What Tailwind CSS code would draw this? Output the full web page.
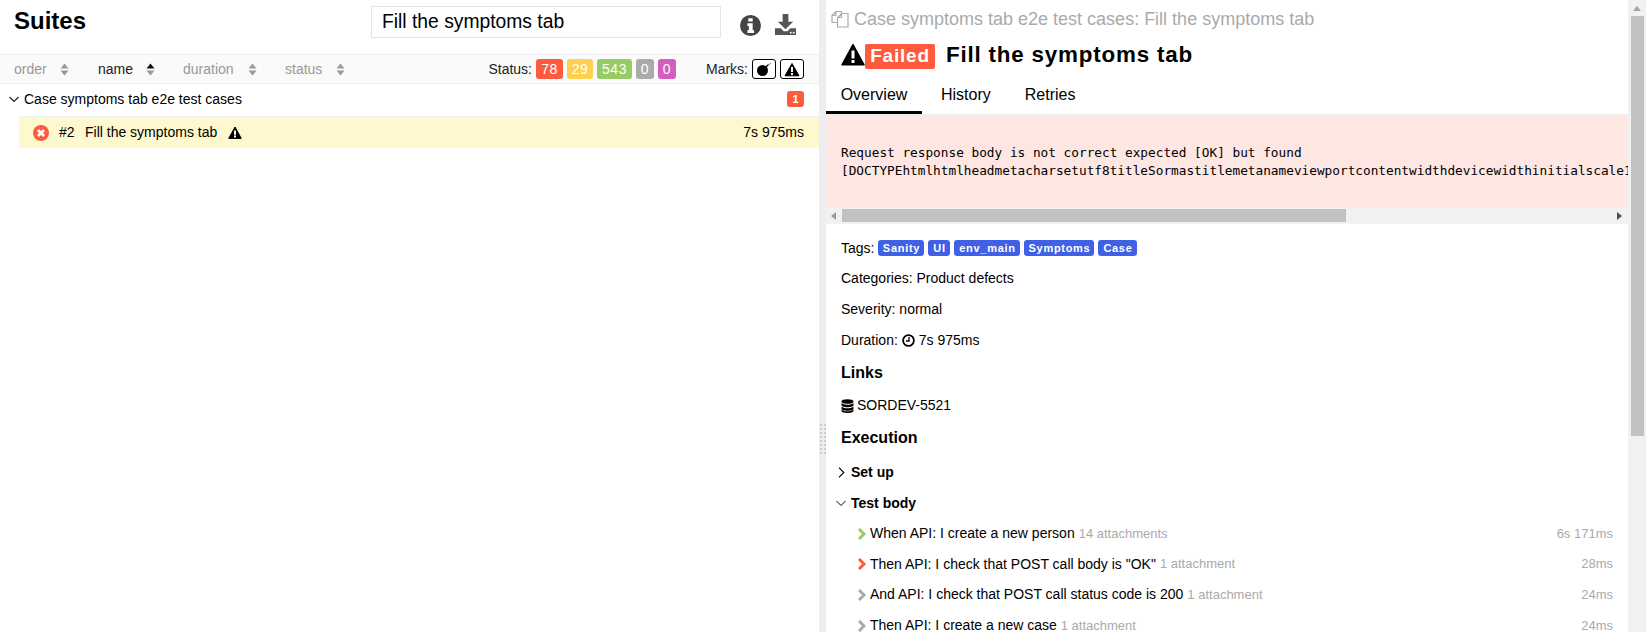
<!DOCTYPE html>
<html lang="en">
<head>
  <meta charset="UTF-8" />
  <title>Suites</title>
  <script src="https://cdn.jsdelivr.net/npm/@tailwindcss/browser@4"></script>
</head>
<body class="h-[632px] overflow-hidden bg-white text-[14px] text-black font-['Liberation_Sans',Arial,sans-serif]">
  <div class="flex h-[632px] overflow-hidden">

    <!-- Suites pane -->
    <section class="w-[819px] shrink-0">
      <header class="flex h-[55px] items-start border-b border-[#eee]">
        <h2 class="ml-[14px] mt-[5px] w-[357px] text-[24px] leading-[32px] font-bold">Suites</h2>
        <div class="mt-[6px] flex h-[32px] w-[350px] items-center border border-[#e5e5e5] pl-[10px] text-[19.300px]">Fill the symptoms tab</div>
        <svg class="ml-[19px] mt-[15px] h-[21px] w-[21px]" viewBox="0 0 24 24"><circle cx="12" cy="12" r="12" fill="#444"/><path fill="#fff" d="M9.500 3.600h5v3.800h-5zM8.500 9.500h6v8h1.600v3H8.500v-3h1.600v-5H8.500z"/></svg>
        <svg class="ml-[13px] mt-[13px] h-[23px] w-[23px]" viewBox="0 0 24 24"><path fill="#555" d="M9 1h6v8h5l-8 8-8-8h5z"/><path fill="#555" d="M1 16h6l3 3h4l3-3h6v7H1z"/><circle cx="17.500" cy="20.500" r="1" fill="#fff"/><circle cx="20.500" cy="20.500" r="1" fill="#fff"/></svg>
      </header>

      <!-- Sort and filter bar -->
      <div class="flex h-[29px] items-center border-b border-[#eee] bg-[#fafafa] pl-[14px] text-[#999]">
        <span class="w-[46px]">order</span>
        <svg class="h-[13px] w-[9px]" viewBox="0 0 9 13"><path fill="#999" d="M4.500 .5 8.500 5.500H.5zM4.500 12.500 .5 7.500h8z"/></svg>
        <span class="ml-[29px] w-[48px] text-[#222]">name</span>
        <svg class="h-[13px] w-[9px]" viewBox="0 0 9 13"><path fill="#111" d="M4.500 .5 8.500 5.500H.5z"/><path fill="#999" d="M4.500 12.500 .5 7.500h8z"/></svg>
        <span class="ml-[28px] w-[65px]">duration</span>
        <svg class="h-[13px] w-[9px]" viewBox="0 0 9 13"><path fill="#999" d="M4.500 .5 8.500 5.500H.5zM4.500 12.500 .5 7.500h8z"/></svg>
        <span class="ml-[28px] w-[51px]">status</span>
        <svg class="h-[13px] w-[9px]" viewBox="0 0 9 13"><path fill="#999" d="M4.500 .5 8.500 5.500H.5zM4.500 12.500 .5 7.500h8z"/></svg>

        <span class="ml-auto mr-[4px] text-[#222]">Status:</span>
        <div class="flex gap-[4px] text-[14px] tracking-[0.5px] text-white">
          <span class="flex h-[20px] w-[27px] items-center justify-center rounded-[3px] bg-[#fd5a3e]">78</span>
          <span class="flex h-[20px] w-[26px] items-center justify-center rounded-[3px] bg-[#ffd050]">29</span>
          <span class="flex h-[20px] w-[35px] items-center justify-center rounded-[3px] bg-[#97cc64]">543</span>
          <span class="flex h-[20px] w-[18px] items-center justify-center rounded-[3px] bg-[#aaa]">0</span>
          <span class="flex h-[20px] w-[18px] items-center justify-center rounded-[3px] bg-[#d35ebe]">0</span>
        </div>
        <span class="ml-[30px] mr-[4px] text-[#222]">Marks:</span>
        <span class="flex h-[20px] w-[24px] items-center justify-center rounded-[3px] border border-black bg-white">
          <svg class="h-[16px] w-[16px]" viewBox="0 0 16 16"><circle cx="6.500" cy="9.500" r="5.500" fill="#000"/><path fill="none" stroke="#000" stroke-width="1.200" d="m10 6 2.500-2.500"/><path fill="none" stroke="#888" d="M13 3.500 15 2"/></svg>
        </span>
        <span class="ml-[4px] mr-[15px] flex h-[20px] w-[24px] items-center justify-center rounded-[3px] border border-black bg-white">
          <svg class="h-[15px] w-[16px]" viewBox="0 0 16 15"><path fill="#000" stroke="#000" stroke-linejoin="round" d="M8 1.500 15 13.800H1z"/><path fill="#fff" d="M7 5h2v5H7zM7 11h2v2H7z"/></svg>
        </span>
      </div>

      <!-- Tree -->
      <div class="flex h-[32px] items-center pb-[2px]">
        <svg class="ml-[9px] h-[7px] w-[10px]" viewBox="0 0 10 7"><path fill="none" stroke="#222" stroke-width="1.200" d="m.5 1 4.500 4.500L9.500 1"/></svg>
        <span class="ml-[5px]">Case symptoms tab e2e test cases</span>
        <span class="ml-auto mr-[15px] flex h-[16px] w-[17px] items-center justify-center rounded-[3px] bg-[#fd5a3e] text-[11px] font-bold text-white">1</span>
      </div>
      <div class="ml-[19px] flex h-[32px] items-center border-t border-[#e8eef2] bg-[#fdf8cd] pr-[15px]">
        <svg class="ml-[14px] h-[16px] w-[16px]" viewBox="0 0 16 16"><circle cx="8" cy="8" r="8" fill="#fd5a3e"/><path fill="none" stroke="#fff" stroke-width="2.800" d="m5 5 6 6M11 5l-6 6"/></svg>
        <span class="ml-[10px] w-[26px]">#2</span>
        <span>Fill the symptoms tab</span>
        <svg class="ml-[11px] h-[13px] w-[14px]" viewBox="0 0 14 13"><path fill="#000" stroke="#000" stroke-linejoin="round" d="M7 1 13.300 12.400H.7z"/><path fill="#fff" d="M6 4.500h2v4.200H6zM6 9.500h2v2H6z"/></svg>
        <span class="ml-auto">7s 975ms</span>
      </div>
    </section>

    <!-- Splitter -->
    <div class="w-[7px] shrink-0 bg-[#eceff2] pl-[1px] pt-[424px]">
      <div class="grid w-[6px] grid-cols-2 gap-[2px]">
        <i class="h-[2px] w-[2px] bg-[#ccc]"></i><i class="h-[2px] w-[2px] bg-[#ccc]"></i>
        <i class="h-[2px] w-[2px] bg-[#ccc]"></i><i class="h-[2px] w-[2px] bg-[#ccc]"></i>
        <i class="h-[2px] w-[2px] bg-[#ccc]"></i><i class="h-[2px] w-[2px] bg-[#ccc]"></i>
        <i class="h-[2px] w-[2px] bg-[#ccc]"></i><i class="h-[2px] w-[2px] bg-[#ccc]"></i>
        <i class="h-[2px] w-[2px] bg-[#ccc]"></i><i class="h-[2px] w-[2px] bg-[#ccc]"></i>
        <i class="h-[2px] w-[2px] bg-[#ccc]"></i><i class="h-[2px] w-[2px] bg-[#ccc]"></i>
        <i class="h-[2px] w-[2px] bg-[#ccc]"></i><i class="h-[2px] w-[2px] bg-[#ccc]"></i>
        <i class="h-[2px] w-[2px] bg-[#ccc]"></i><i class="h-[2px] w-[2px] bg-[#ccc]"></i>
      </div>
    </div>

    <!-- Test result pane -->
    <section class="w-[802px] shrink-0 overflow-hidden">
      <div class="flex h-[37px] items-center pl-[5px] pt-[1px] text-[18px] text-[#aaa]">
        <svg class="h-[18px] w-[18px]" viewBox="0 0 18 18"><path fill="none" stroke="#aaa" stroke-width="1.200" stroke-linejoin="round" d="M5 1.500h5.500v2M5 1.500 1 5.500v7h5M5 1.500v4H1"/><path fill="none" stroke="#aaa" stroke-width="1.200" stroke-linejoin="round" d="M10.500 3.500h6.500v13.500H6.500v-9zM10.500 3.500v4h-4"/></svg>
        <span class="ml-[5px]">Case symptoms tab e2e test cases: Fill the symptoms tab</span>
      </div>
      <div class="flex h-[33px] items-center pl-[15px] pt-[2px]">
        <svg class="h-[23px] w-[24px]" viewBox="0 0 24 23"><path fill="#000" stroke="#000" stroke-width="1.500" stroke-linejoin="round" d="M12 1.500 23 21.800H1z"/><path fill="#fff" d="M10.500 7.500h3v8h-3zM10.500 17h3v3h-3z"/></svg>
        <span class="mt-[3px] flex h-[25px] w-[70px] items-center justify-center rounded-[2px] bg-[#fd5a3e] text-[19px] font-bold tracking-[0.8px] text-white">Failed</span>
        <h2 class="ml-[11px] text-[22.400px] font-bold tracking-[0.800px]">Fill the symptoms tab</h2>
      </div>
      <nav class="flex h-[45px] border-b border-[#eee] text-[16px]">
        <a class="flex h-[44px] w-[96px] items-center justify-center border-b-[3px] border-black pt-[8px]">Overview</a>
        <a class="ml-[19px] flex h-[44px] items-center pt-[6px]">History</a>
        <a class="ml-[34px] flex h-[44px] items-center pt-[6px]">Retries</a>
      </nav>

      <!-- Failure message -->
      <pre class="h-[92px] overflow-hidden whitespace-pre bg-[#fee6e3] pl-[15px] pt-[29px] font-['DejaVu_Sans_Mono',monospace] text-[12.750px] leading-[18px]">Request response body is not correct expected [OK] but found
[DOCTYPEhtmlhtmlheadmetacharsetutf8titleSormastitlemetanameviewportcontentwidthdevicewidthinitialscale1</pre>
      <div class="flex h-[17px] items-center bg-[#f1f1f1]">
        <svg class="ml-[5px] h-[8px] w-[5px]" viewBox="0 0 5 8"><path fill="#999" d="M5 0v8L0 4z"/></svg>
        <div class="ml-[6px] h-[13px] w-[504px] bg-[#c1c1c1]"></div>
        <svg class="ml-auto mr-[6px] h-[8px] w-[5px]" viewBox="0 0 5 8"><path fill="#505050" d="M0 0v8l5-4z"/></svg>
      </div>

      <!-- Overview -->
      <div class="pl-[15px] pr-[15px] pt-[8px]">
        <div class="flex h-[31px] items-center pt-[1px]">
          <span>Tags:</span>
          <div class="ml-[4px] flex gap-[4px] text-[11px] font-bold tracking-[0.7px] text-white">
            <span class="flex h-[16px] w-[46px] items-center justify-center rounded-[3px] bg-[#4060e6]">Sanity</span>
            <span class="flex h-[16px] w-[22px] items-center justify-center rounded-[3px] bg-[#4060e6]">UI</span>
            <span class="flex h-[16px] w-[66px] items-center justify-center rounded-[3px] bg-[#4060e6]">env_main</span>
            <span class="flex h-[16px] w-[70px] items-center justify-center rounded-[3px] bg-[#4060e6]">Symptoms</span>
            <span class="flex h-[16px] w-[39px] items-center justify-center rounded-[3px] bg-[#4060e6]">Case</span>
          </div>
        </div>
        <div class="flex h-[31px] items-center">Categories: Product defects</div>
        <div class="flex h-[31px] items-center">Severity: normal</div>
        <div class="flex h-[31px] items-center">Duration:
          <svg class="ml-[4px] mr-[4px] h-[13px] w-[13px]" viewBox="0 0 13 13"><circle cx="6.500" cy="6.500" r="5.400" fill="none" stroke="#000" stroke-width="1.800"/><path fill="none" stroke="#000" stroke-width="1.300" d="M7 3v4H4"/></svg>
          7s 975ms</div>
        <h3 class="flex h-[33px] items-center text-[16px] font-bold">Links</h3>
        <div class="flex h-[33px] items-center">
          <svg class="mr-[3px] h-[14px] w-[13px]" viewBox="0 0 13 14"><ellipse cx="6.500" cy="2.500" rx="6" ry="2.300" fill="#000"/><path fill="#000" d="M.5 4v2c0 1.300 2.700 2.300 6 2.300s6-1 6-2.300V4c-1 1.200-3.300 1.800-6 1.800S1.500 5.200.5 4zM.5 7.500v2c0 1.300 2.700 2.300 6 2.300s6-1 6-2.300v-2c-1 1.200-3.300 1.800-6 1.800s-5-.6-6-1.800zM.5 10.500v1.200c0 1.300 2.700 2.300 6 2.300s6-1 6-2.300v-1.200c-1 1.200-3.300 1.800-6 1.800s-5-.6-6-1.800z"/></svg>
          SORDEV-5521</div>
        <h3 class="flex h-[31px] items-center text-[16px] font-bold">Execution</h3>

        <div class="-ml-[5px] mt-[4px] flex h-[31px] items-center text-[14px] font-bold">
          <svg class="ml-[2px] mr-[6px] h-[11px] w-[7px]" viewBox="0 0 7 11"><path fill="none" stroke="#000" stroke-width="1.100" d="m1 .7 4.800 4.800L1 10.300"/></svg>
          <span>Set up</span>
        </div>
        <div class="-ml-[5px] flex h-[30px] items-center text-[14px] font-bold">
          <svg class="mr-[5px] h-[7px] w-[10px]" viewBox="0 0 10 7"><path fill="none" stroke="#000" stroke-width="1" d="m.5 1 4.500 4.500L9.500 1"/></svg>
          <span>Test body</span>
        </div>

        <div class="flex h-[31px] items-center pl-[17px]">
          <svg class="mr-[4px] h-[12px] w-[8px]" viewBox="0 0 8 12"><path fill="none" stroke="#97cc64" stroke-width="3" d="m1 1 5 5-5 5"/></svg>
          <span>When API: I create a new person</span>
          <span class="ml-[4px] text-[13px] text-[#aaa]">14 attachments</span>
          <span class="ml-auto text-[13px] text-[#aaa]">6s 171ms</span>
        </div>
        <div class="flex h-[30px] items-center pl-[17px]">
          <svg class="mr-[4px] h-[12px] w-[8px]" viewBox="0 0 8 12"><path fill="none" stroke="#fd5a3e" stroke-width="3" d="m1 1 5 5-5 5"/></svg>
          <span>Then API: I check that POST call body is "OK"</span>
          <span class="ml-[4px] text-[13px] text-[#aaa]">1 attachment</span>
          <span class="ml-auto text-[13px] text-[#aaa]">28ms</span>
        </div>
        <div class="flex h-[31px] items-center pl-[17px]">
          <svg class="mr-[4px] h-[12px] w-[8px]" viewBox="0 0 8 12"><path fill="none" stroke="#aaa" stroke-width="3" d="m1 1 5 5-5 5"/></svg>
          <span>And API: I check that POST call status code is 200</span>
          <span class="ml-[4px] text-[13px] text-[#aaa]">1 attachment</span>
          <span class="ml-auto text-[13px] text-[#aaa]">24ms</span>
        </div>
        <div class="flex h-[31px] items-center pl-[17px]">
          <svg class="mr-[4px] h-[12px] w-[8px]" viewBox="0 0 8 12"><path fill="none" stroke="#aaa" stroke-width="3" d="m1 1 5 5-5 5"/></svg>
          <span>Then API: I create a new case</span>
          <span class="ml-[4px] text-[13px] text-[#aaa]">1 attachment</span>
          <span class="ml-auto text-[13px] text-[#aaa]">24ms</span>
        </div>
      </div>
    </section>

    <!-- Page scrollbar -->
    <div class="flex w-[18px] shrink-0 flex-col items-center bg-[#f1f1f1]">
      <svg class="mt-[6px] h-[5px] w-[8px]" viewBox="0 0 8 5"><path fill="#a3a3a3" d="M4 0l4 5H0z"/></svg>
      <div class="ml-[1px] mt-[5px] h-[420px] w-[13px] bg-[#c1c1c1]"></div>
    </div>
  </div>
</body>
</html>
